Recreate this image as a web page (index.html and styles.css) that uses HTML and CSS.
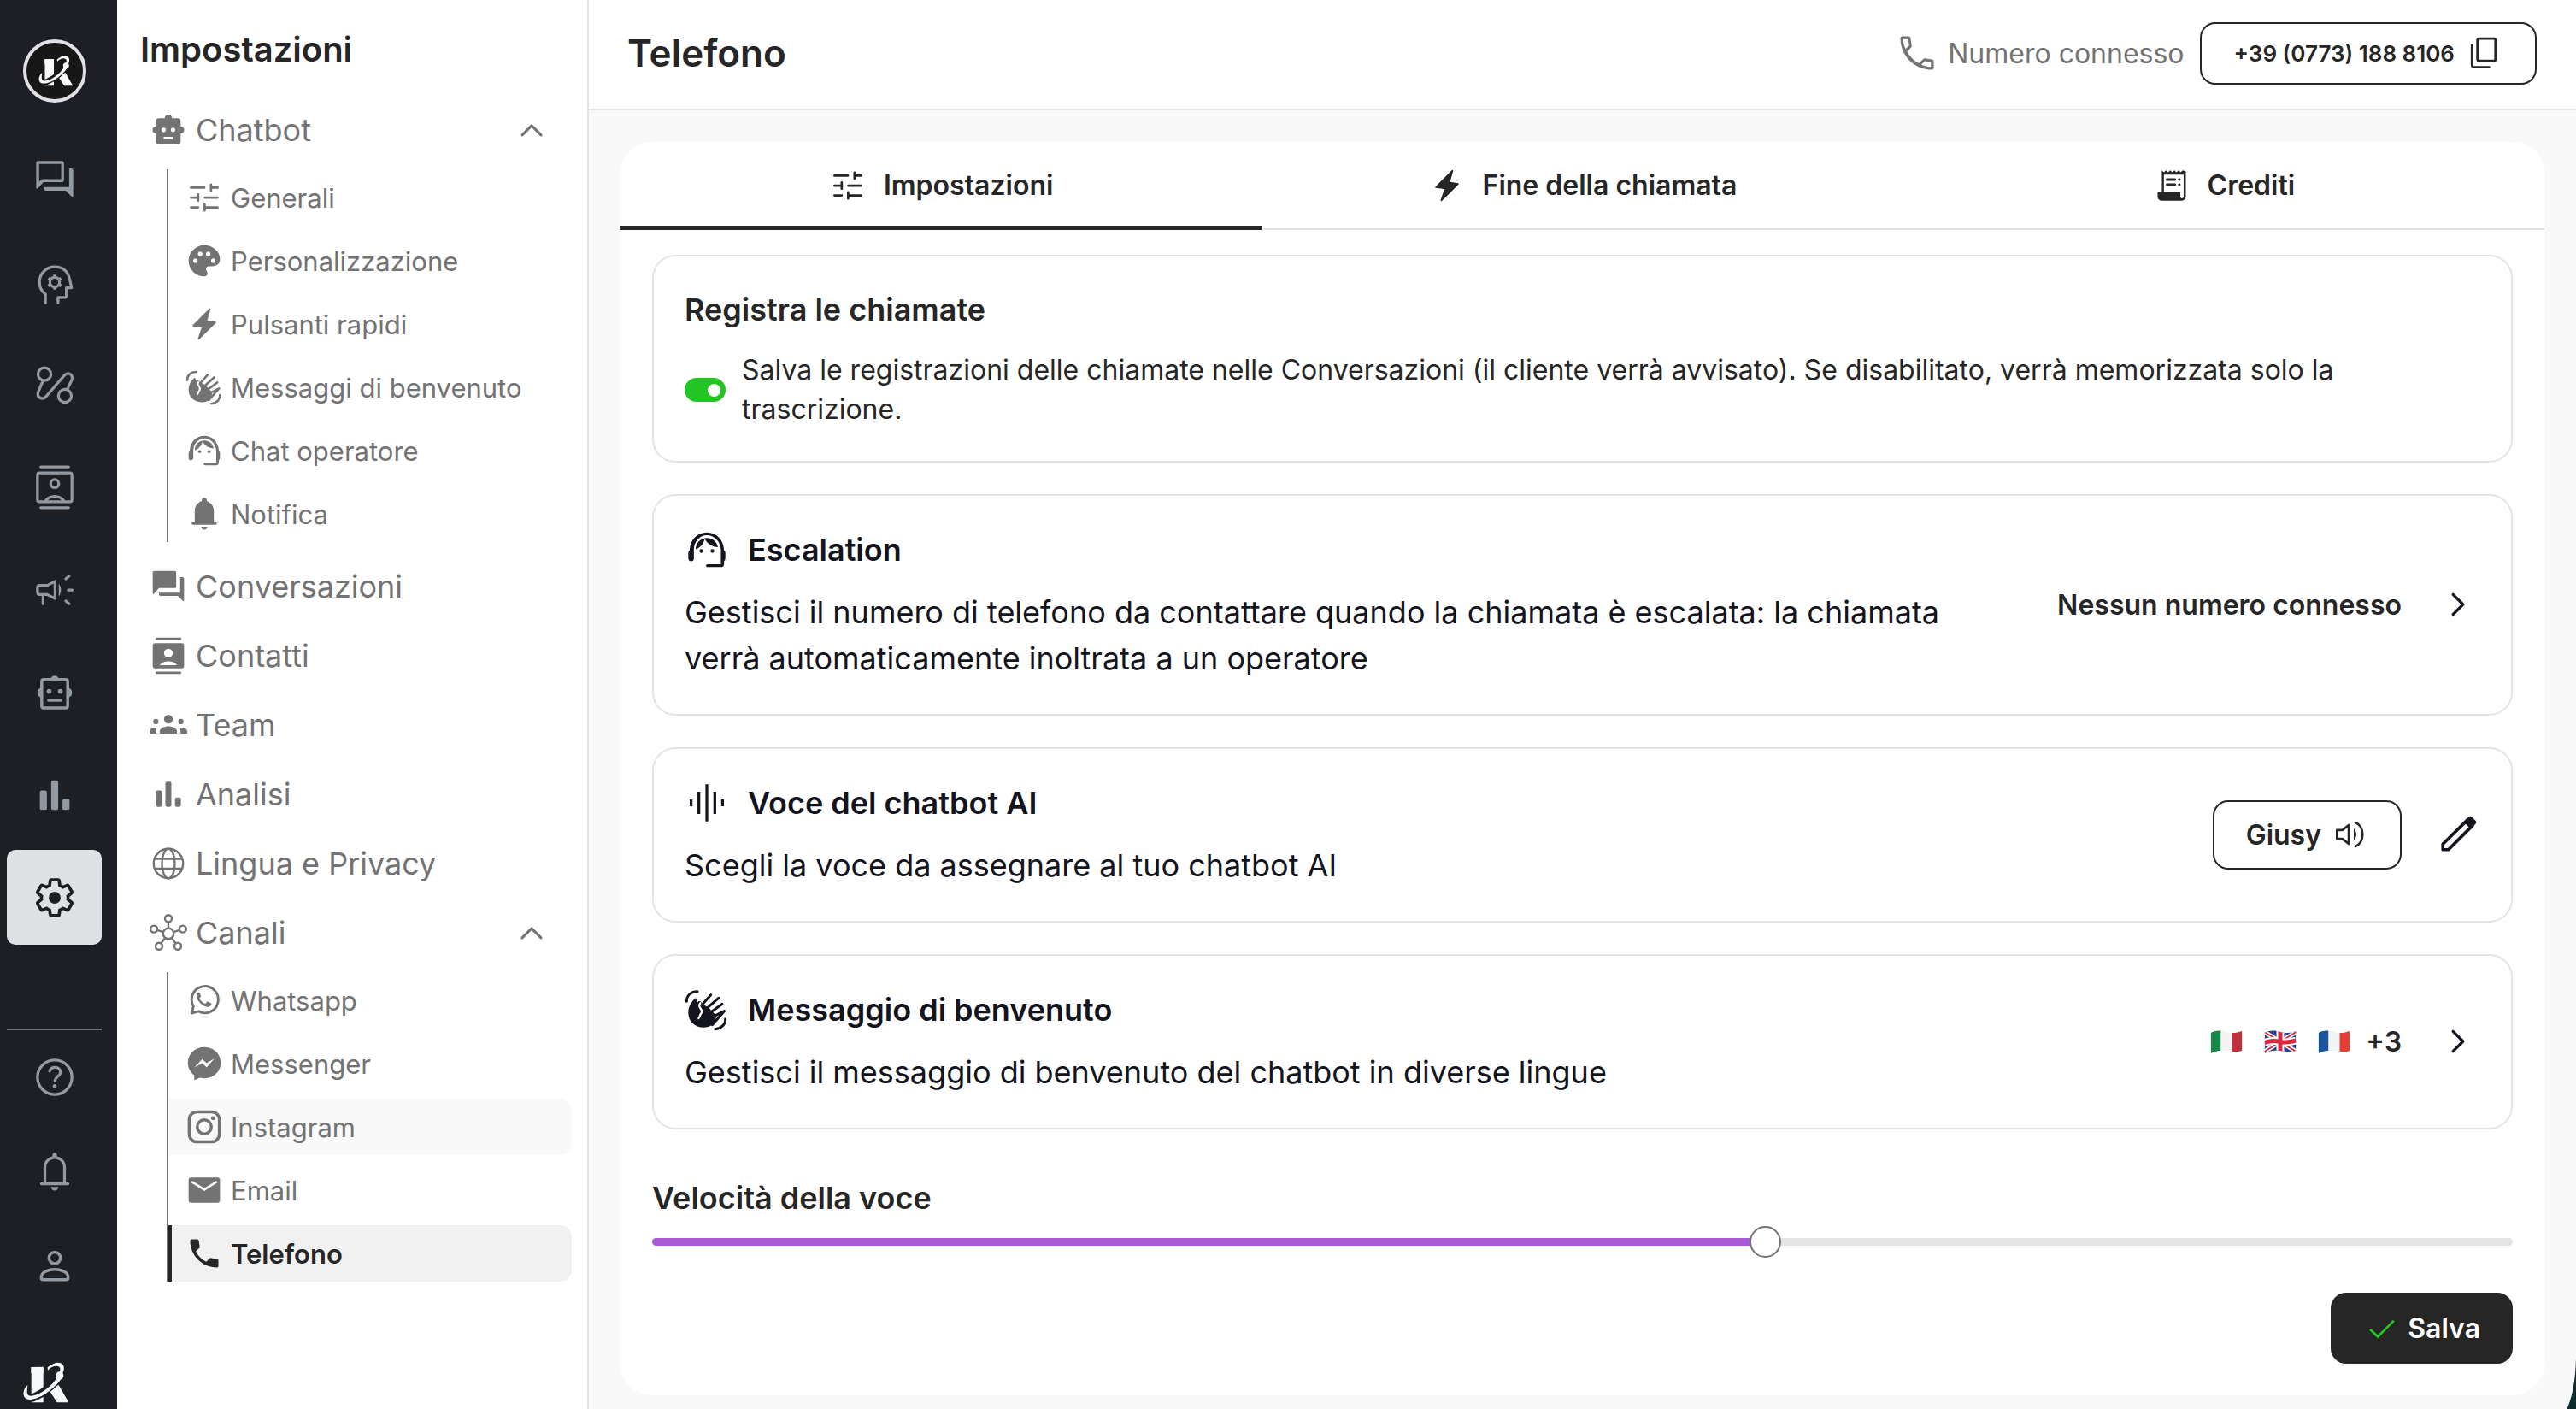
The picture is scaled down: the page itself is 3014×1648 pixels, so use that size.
FILE: index.html
```html
<!DOCTYPE html>
<html lang="it">
<head>
<meta charset="utf-8">
<meta name="viewport" content="width=device-width, initial-scale=1">
<title>Telefono – Impostazioni</title>
<link rel="stylesheet" href="styles.css">
</head>
<body>
<svg class="sprite" aria-hidden="true">
  <symbol id="logo" viewBox="0 0 192 189">
    <path d="M49 39H92V163H50V39zM146 102L181 163H140L110 116z" fill="#f8f9fb"/>
    <path d="M26 106C16 140 32 158 66 142C100 126 132 98 146 70C166 44 158 24 130 33" fill="none" stroke="var(--logo-bg)" stroke-width="28"/>
    <path d="M92 38V60H49V39z" fill="#f8f9fb"/>
    <path d="M37 102C18 118 18 146 34 151C50 158 84 146 112 124C132 108 148 92 156 78L142 72C132 90 116 108 92 124C66 141 38 146 36 132C34 122 36 112 37 102z" fill="#f8f9fb"/>
    <circle cx="149" cy="69" r="14" fill="#f8f9fb"/>
    <path d="M107 40C128 22 150 18 160 30C168 40 164 54 157 66L148 58C154 46 152 38 142 36C130 34 118 40 108 50z" fill="#f8f9fb"/>
  </symbol>
  <symbol id="forum-outline" viewBox="0 0 24 24"><path fill="currentColor" d="M15.5 3.6v8.2H5l-1.400 1.400V3.600h11.900m.5-1.600H3c-.55 0-1 .45-1 1v13.400c0 .6.500.6.8.4L6 13.400h10c.55 0 1-.45 1-1V3c0-.55-.45-1-1-1zm5 4h-1.200v10H6.200v1c0 .55.45 1 1 1H18l3.200 3.200c.3.300.8.100.8-.4V7c0-.55-.45-1-1-1z"/></symbol>
  <symbol id="forum" viewBox="0 0 24 24"><path fill="currentColor" d="M21 6h-1.500v10H6v1c0 .55.45 1 1 1h11l3.200 3.200c.3.300.8.100.8-.4V7c0-.55-.45-1-1-1zm-4 6V3c0-.55-.45-1-1-1H3c-.55 0-1 .45-1 1v13.200c0 .6.500.7.800.4L6 13h10c.55 0 1-.45 1-1z"/></symbol>
  <symbol id="gear" viewBox="0 0 24 24"><path d="M19.140 12.940c.04-.3.060-.61.060-.94 0-.32-.02-.64-.07-.94l2.030-1.580c.18-.14.23-.41.120-.61l-1.920-3.320c-.12-.22-.37-.29-.59-.22l-2.390.96c-.5-.38-1.030-.7-1.620-.94l-.36-2.540c-.04-.24-.24-.41-.48-.41h-3.840c-.24 0-.43.170-.47.410l-.36 2.540c-.59.240-1.130.570-1.620.940l-2.390-.96c-.22-.08-.47 0-.59.220L2.740 8.870c-.12.210-.08.470.120.610l2.030 1.580c-.05.300-.09.630-.09.940s.02.640.070.940l-2.030 1.580c-.18.140-.23.410-.12.610l1.920 3.320c.12.220.370.290.590.220l2.390-.96c.5.380 1.030.7 1.620.940l.36 2.540c.05.240.240.410.480.410h3.840c.24 0 .44-.17.470-.41l.36-2.540c.59-.24 1.130-.56 1.620-.94l2.390.96c.22.080.470 0 .59-.22l1.920-3.320c.12-.22.070-.47-.12-.61l-2.010-1.580z" fill="none" stroke="currentColor" stroke-width="1.700"/></symbol>
  <symbol id="settings" viewBox="0 0 24 24"><use href="#gear"/><circle cx="12" cy="12" r="3.200" fill="currentColor"/></symbol>
  <symbol id="mind" viewBox="0 0 24 24"><g fill="none" stroke="currentColor" stroke-width="1.500" stroke-linecap="round" stroke-linejoin="round"><path d="M7 23.200v-4.700C4.700 16.900 3.800 14.400 3.800 12c0-4.800 3.700-8.200 8.300-8.200 4.300 0 7 2.700 8 6.600l1 4.600h-2.800v4.100c0 .8-.5 1.200-1.200 1.200h-3.300v2.900"/><circle cx="12" cy="12" r="2.600"/><path stroke-width="1.700" stroke-linecap="butt" d="M12 9.500V8m0 8v-1.500M9.800 10.700 8.500 10m7 4-1.300-.7m0-2.600L15.500 10m-7 4 1.300-.7"/></g></symbol>
  <symbol id="route" viewBox="0 0 24 24"><g fill="none" stroke="currentColor" stroke-width="1.500"><circle cx="6.500" cy="6.300" r="3.500"/><circle cx="17.500" cy="18" r="3.500"/><path d="M5.700 9.700 3 16.200c-.8 2.800 2.400 4 4 2.500L17.200 7c2-2.200 5-.6 4 2.600l-2.500 5"/></g></symbol>
  <symbol id="contacts-outline" viewBox="0 0 24 24"><g fill="none" stroke="currentColor" stroke-width="1.500" stroke-linecap="round"><path d="M4.500 1h15M4.500 23h15"/><rect x="2.700" y="4.200" width="18.600" height="15.600" rx="1"/><circle cx="12" cy="10" r="2.200"/><path d="M7 19.500c2-3.500 8-3.500 10 0"/></g></symbol>
  <symbol id="contacts" viewBox="0 0 24 24"><path d="M4.500 1.200h15M4.500 22.800h15" stroke="currentColor" stroke-width="1.500" stroke-linecap="round"/><path fill="currentColor" fill-rule="evenodd" d="M3.500 4h17A1.500 1.500 0 0 1 22 5.500v13a1.500 1.500 0 0 1-1.500 1.500h-17A1.500 1.500 0 0 1 2 18.500v-13A1.500 1.500 0 0 1 3.500 4zM12 7.500a2.800 2.800 0 1 0 0 5.600 2.800 2.800 0 0 0 0-5.600zM6.500 18h11c-2-3.200-9-3.200-11 0z"/></symbol>
  <symbol id="campaign" viewBox="0 0 24 24"><g fill="none" stroke="currentColor" stroke-width="1.500" stroke-linecap="round" stroke-linejoin="round"><path d="M12.200 7.300v9.400L8 14.500H3.900c-.7 0-1.200-.5-1.200-1.200v-2.600c0-.7.500-1.200 1.200-1.200H8zM5.700 14.500v5M18 6l1.800-1.500M19.300 12h2.200M18 18l1.800 1.500"/></g><path fill="currentColor" d="M14.200 8.500c1.600 2 1.600 5 0 7z"/></symbol>
  <symbol id="robot-outline" viewBox="0 0 24 24"><g fill="currentColor"><path d="M9.800 4.500a2.300 2.300 0 0 1 4.400 0zM4.600 9.500a2.700 2.700 0 0 0 0 5.200zM19.400 9.500a2.700 2.700 0 0 1 0 5.200z"/><circle cx="9" cy="11.300" r="1.300"/><circle cx="15" cy="11.300" r="1.300"/></g><rect x="5" y="5" width="14" height="15.300" rx="1" fill="none" stroke="currentColor" stroke-width="1.600"/><path d="M8.700 16.200h6.600" stroke="currentColor" stroke-width="1.600" stroke-linecap="round"/></symbol>
  <symbol id="robot" viewBox="0 0 24 24"><path fill="currentColor" fill-rule="evenodd" d="M9.700 4.500a2.300 2.300 0 0 1 4.600 0H18a1.800 1.800 0 0 1 1.800 1.800v3.400a2.300 2.300 0 0 1 0 4.600v5.200a1.500 1.500 0 0 1-1.500 1.500H5.700a1.500 1.500 0 0 1-1.500-1.500v-5.200a2.300 2.300 0 0 1 0-4.600V6.300A1.800 1.800 0 0 1 6 4.500zM9 10.500a1.400 1.400 0 1 0 0 2.800 1.400 1.400 0 0 0 0-2.800zm6 0a1.400 1.400 0 1 0 0 2.800 1.400 1.400 0 0 0 0-2.800zm-6 5.800v1.500h6v-1.500z"/></symbol>
  <symbol id="bars" viewBox="0 0 24 24"><g fill="currentColor"><rect x="4" y="9.500" width="3.800" height="10.500" rx="1"/><rect x="10.100" y="4" width="3.800" height="16" rx="1"/><rect x="16.200" y="14" width="3.800" height="6" rx="1"/></g></symbol>
  <symbol id="help" viewBox="0 0 24 24"><g fill="none" stroke="currentColor" stroke-width="1.500" stroke-linecap="round"><circle cx="12" cy="12" r="9.300"/><path d="M9.300 8.700c.4-1.400 1.500-2.100 2.900-2.100 1.700 0 2.900 1.100 2.900 2.600 0 2.200-3 2.600-3 4.800"/></g><circle cx="12" cy="16.800" r="1.100" fill="currentColor"/></symbol>
  <symbol id="bell-outline" viewBox="0 0 24 24"><g fill="none" stroke="currentColor" stroke-width="1.500" stroke-linecap="round"><path d="M4.800 18.700h14.400M6.700 18.500V10c0-3.100 2.300-5.500 5.300-5.500s5.300 2.400 5.300 5.500v8.500"/></g><path fill="currentColor" d="M10.800 4.500V3.200a1.200 1.200 0 0 1 2.400 0v1.300zM10 20.400h4a2 2 0 0 1-4 0z"/></symbol>
  <symbol id="bell" viewBox="0 0 24 24"><path fill="currentColor" d="M4.700 19a.8.800 0 0 1 0-1.600h1.200V10c0-2.900 1.900-5.300 4.500-6v-.6a1.600 1.600 0 0 1 3.200 0V4c2.600.7 4.500 3.100 4.500 6v7.400h1.200a.8.800 0 0 1 0 1.600zM10.100 20.200h3.800a1.900 1.900 0 0 1-3.800 0z"/></symbol>
  <symbol id="person" viewBox="0 0 24 24"><g fill="none" stroke="currentColor" stroke-width="1.600"><circle cx="12" cy="8" r="3.100"/><path d="M4.800 18.200c0-2.600 4-4 7.200-4s7.200 1.400 7.200 4v.7c0 .5-.3.800-.8.800H5.600c-.5 0-.8-.3-.8-.8z"/></g></symbol>
  <symbol id="tune" viewBox="0 0 24 24"><path fill="none" stroke="currentColor" stroke-width="1.500" stroke-linecap="round" d="M3.500 5.700h8.500M16.300 3.700v4M16.300 5.700h4.200M3.500 12h4.300M8.100 10v4M12.300 12h8.200M3.500 18.300h4.600M12.200 16.300v4M12.200 18.300h8.300"/></symbol>
  <symbol id="palette" viewBox="0 0 24 24"><path fill="currentColor" d="M12 2C6.490 2 2 6.490 2 12s4.490 10 10 10c1.380 0 2-1 2-2 0-.61-.3-1.200-.6-1.700-.9-1.300 0-2.800 1.500-2.800H17c2.900 0 5-1.700 5-4.500C22 6.040 17.510 2 12 2zm5.700 11.500c-.83 0-1.400-.67-1.400-1.500s.570-1.500 1.400-1.500 1.400.67 1.400 1.500-.57 1.500-1.400 1.500zm-3.200-4.300c-.83 0-1.500-.67-1.500-1.500s.67-1.500 1.500-1.500 1.500.67 1.500 1.500-.67 1.500-1.500 1.500zM4.900 12c0-.83.670-1.500 1.500-1.500s1.400.67 1.400 1.500-.57 1.500-1.400 1.500S4.900 12.830 4.900 12zm6-4.300c0 .83-.67 1.500-1.500 1.500s-1.500-.67-1.500-1.500.67-1.500 1.500-1.500 1.500.67 1.500 1.500z"/></symbol>
  <symbol id="bolt" viewBox="0 0 24 24"><path fill="currentColor" stroke="currentColor" stroke-width="1" stroke-linejoin="round" d="M15.500 2.600 5 13l6 .8-2.600 7.700L19 11l-5.700-1z"/></symbol>
  <symbol id="wave" viewBox="11 27 156 156"><path fill="currentColor" d="M50 64C36 76 24 92 24 116C24 146 47 167 78 167C96 167 108 160 118 150L122 126L96 98L72 84C70 74 60 72 56 80z"/><g fill="none" stroke="currentColor" stroke-width="9" stroke-linecap="round"><path d="M70 90 103 53M85 104 130 64M98 118 143 85M110 130 150 110M108 158 150 110M18 76C18 54 34 41 56 41M118 173C140 171 155 157 154 137"/></g><path fill="none" stroke="#fff" stroke-width="7" stroke-linecap="round" d="M66 82C52 96 80 104 69 118C64 124 66 128 60 135"/></symbol>
  <symbol id="agent" viewBox="0 0 24 24"><g fill="currentColor"><path d="M21.300 12.300C21.100 6.400 17 2.600 12 2.600S2.900 6.400 2.700 12.300c-.5.300-.7.900-.7 1.600v2.700c0 .9.600 1.600 1.500 1.600s1.500-.6 1.500-1.400V12C5 7.800 8.100 4.200 12 4.200s7.600 3.600 7.600 7.800v7.800h-7.200c-.5 0-.8.300-.8.800s.3.800.8.800h7.200c1 0 1.700-.7 1.700-1.600v-1.700c.4-.3.700-.8.700-1.400v-3c0-.6-.2-1.100-.7-1.400z"/><circle cx="9" cy="12.700" r="1"/><circle cx="15" cy="12.700" r="1"/><path d="M18 10.600C17.500 7.600 15 5.600 12.050 5.600c-3.030 0-6.290 2.510-6.030 6.250 2.470-1.010 4.330-3.010 4.860-5.690 1.310 2.630 4 4.440 7.120 4.440z"/></g></symbol>
  <symbol id="team" viewBox="0 0 24 24"><g fill="currentColor"><circle cx="12" cy="8.200" r="2.800"/><circle cx="4" cy="9.800" r="1.700"/><circle cx="20" cy="9.800" r="1.700"/><path d="M6.500 17v-1c0-2 2.500-3.200 5.500-3.200s5.500 1.200 5.500 3.200v1c0 .3-.2.500-.5.500H7c-.3 0-.5-.2-.5-.5zM0 17v-1c0-1.500 1.600-2.600 4.900-2.400-.5.700-.7 1.500-.7 2.400v1.500H.500c-.3 0-.5-.2-.5-.5zM24 17v-1c0-1.500-1.600-2.600-4.900-2.400.5.700.7 1.500.7 2.400v1.500h3.700c.3 0 .5-.2.500-.5z"/></g></symbol>
  <symbol id="globe" viewBox="0 0 24 24"><g fill="none" stroke="currentColor" stroke-width="1.300"><circle cx="12" cy="12" r="9.400"/><ellipse cx="12" cy="12" rx="4.100" ry="9.400"/><path d="M3.200 9h17.600M3.200 15.200h17.600"/></g></symbol>
  <symbol id="hub" viewBox="0 0 24 24"><g fill="none" stroke="currentColor" stroke-width="1.300"><circle cx="12" cy="12.500" r="3.400"/><circle cx="12" cy="2.900" r="2.200"/><circle cx="2.800" cy="9.600" r="2.200"/><circle cx="21.200" cy="9.600" r="2.200"/><circle cx="6" cy="20.600" r="2.200"/><circle cx="18" cy="20.600" r="2.200"/><path d="M12 5.100v4M4.900 10.300l3.800 1.200M19.100 10.300l-3.800 1.200M7.300 18.800l2.600-3.500M16.700 18.800l-2.600-3.500"/></g></symbol>
  <symbol id="whatsapp" viewBox="0 0 24 24"><path fill="none" stroke="currentColor" stroke-width="1.600" stroke-linejoin="round" d="M3.900 20.200l1.200-4.300A8.500 8.500 0 1 1 8.300 19z"/><path fill="currentColor" d="M9.300 7.400c-.2-.4-.5-.5-.8-.5-.6 0-1.500.8-1.500 2.100 0 3 4 7.200 7.200 7.200 1.300 0 2.400-.8 2.400-1.800 0-.3 0-.4-.2-.5l-2-1c-.3-.1-.5-.1-.7.1l-.8 1c-.2.200-.4.200-.7.100-1.300-.6-2.500-1.700-3.200-3-.1-.3-.1-.4.100-.6l.6-.7c.1-.2.100-.4 0-.6z"/></symbol>
  <symbol id="messenger" viewBox="0 0 24 24"><path fill="currentColor" fill-rule="evenodd" d="M12 1.500c5.900 0 10.500 4.300 10.500 10S17.900 21.400 12 21.400c-1 0-2-.1-2.900-.4l-3.500 1.600v-3.200C3.100 17.600 1.500 14.800 1.500 11.500c0-5.700 4.600-10 10.500-10zM5.700 14.400l5-5.300 2.700 2.600 5-2.900-4.900 5.600-2.700-2.700z"/></symbol>
  <symbol id="instagram" viewBox="0 0 24 24"><g fill="none" stroke="currentColor" stroke-width="1.900"><rect x="2.400" y="2.400" width="19.200" height="19.200" rx="5"/><circle cx="12" cy="12" r="4.500"/></g><circle cx="17.600" cy="6.500" r="1.300" fill="currentColor"/></symbol>
  <symbol id="mail" viewBox="0 0 24 24"><path fill="currentColor" fill-rule="evenodd" d="M3.500 4h17c.8 0 1.500.7 1.500 1.500v13c0 .8-.7 1.500-1.500 1.500h-17c-.8 0-1.500-.7-1.500-1.500v-13C2 4.700 2.700 4 3.500 4zm.8 2-.7 1.200L12 12.600l8.400-5.400-.7-1.200L12 10.800z"/></symbol>
  <symbol id="phone" viewBox="0 0 24 24"><path fill="currentColor" d="M7.500 3H4c-.55 0-1 .45-1 1 0 9.390 7.610 17 17 17 .55 0 1-.45 1-1v-3.490c0-.55-.45-.9-1-1l-3.570-.570c-.4-.1-.8 0-1.020.240l-2.200 2.200c-2.830-1.450-5.150-3.760-6.590-6.590l2.200-2.200c.28-.28.360-.67.250-1.020L8.500 4c-.1-.55-.45-1-1-1z"/></symbol>
  <symbol id="phone-outline" viewBox="0 0 24 24"><path fill="currentColor" fill-rule="evenodd" d="M7.500 3H4c-.55 0-1 .45-1 1 0 9.390 7.610 17 17 17 .55 0 1-.45 1-1v-3.490c0-.55-.45-.9-1-1l-3.570-.570c-.4-.1-.8 0-1.020.240l-2.500 2.400c-2.500-1.450-4.850-3.760-6.290-6.290l2.200-2.300c.28-.28.360-.67.250-1.020L8.500 4c-.1-.55-.45-1-1-1zM4.500 4.500h2.600l.7 3.400L5.800 9.800C5 8.200 4.500 6.400 4.500 4.500zm15 15c-1.800-.1-3.600-.5-5.200-1.300l1.900-1.800 3.300.6z"/></symbol>
  <symbol id="copy" viewBox="0 0 24 24"><g fill="none" stroke="currentColor" stroke-width="1.500" stroke-linecap="round"><rect x="8" y="2.800" width="11.500" height="14.200" rx="1"/><path d="M4.500 7v12.700c0 .8.500 1.300 1.300 1.300h9.700"/></g></symbol>
  <symbol id="receipt" viewBox="0 0 24 24"><path fill="currentColor" d="M5.700 2.300 7 3.500l1.300-1.200 1.400 1.200L11 2.300l1.400 1.200 1.300-1.200L15 3.500l1.400-1.200 1.300 1.200L19 2.300 21 3v16c0 1.500-1 2.700-2.500 2.700H5.500C4 21.700 3 20.500 3 19v-2.200c0-.4.300-.8.800-.8h1.900zM7 5v11h9.700c.5 0 .8.300.8.800V19c0 .7.400 1.200 1 1.200s1.100-.5 1.100-1.200V5z"/><path stroke="currentColor" stroke-width="1.600" stroke-linecap="round" d="M9 8.200h5M9 11.500h5M16.800 8.200h.1M16.800 11.500h.1"/></symbol>
  <symbol id="voice" viewBox="0 0 24 24"><path stroke="currentColor" stroke-width="1.500" d="M3.500 10.200v3.600M7.700 6v12M12 2v20M16.300 6v12M20.500 10.200v3.600"/></symbol>
  <symbol id="speaker" viewBox="0 0 24 24"><g fill="none" stroke="currentColor" stroke-width="1.500" stroke-linejoin="round" stroke-linecap="round"><path d="M11.500 6v12L7.500 14.800H4V9.200h3.500zM15.800 4.400c6 2.400 6 12.800 0 15.200"/></g><path fill="currentColor" d="M14.700 8.300c2.200 1.700 2.200 5.700 0 7.400z"/></symbol>
  <symbol id="pencil" viewBox="0 0 24 24"><path d="M3.800 20.200v-3L17 4.200l2.900 2.900L6.800 20.200z" fill="none" stroke="currentColor" stroke-width="1.700" stroke-linejoin="round"/><path fill="currentColor" d="m15 5.200 2.600-2.600c.6-.6 1.300-.6 1.900 0l1.900 1.900c.6.600.6 1.300 0 1.900L18.800 9z"/></symbol>
  <symbol id="chev-up" viewBox="0 0 24 24"><path d="m6 15.200 6-6 6 6" fill="none" stroke="currentColor" stroke-width="1.600" stroke-linecap="round" stroke-linejoin="round"/></symbol>
  <symbol id="chev-right" viewBox="0 0 24 24"><path d="m9.300 6.600 5.400 5.400-5.400 5.400" fill="none" stroke="currentColor" stroke-width="1.500" stroke-linecap="round" stroke-linejoin="round"/></symbol>
  <symbol id="check" viewBox="0 0 24 24"><path d="m4.500 12.500 4.800 4.700L19.500 7" fill="none" stroke="currentColor" stroke-width="1.500"/></symbol>
  <clipPath id="flag-shape"><path d="M0 3C7 0 11 0 18.500 2S30 3 37 1V24C30 26 26 25 18.500 24S7 24 0 27z"/></clipPath>
</svg>

<div class="app">
  <nav class="rail" aria-label="Principale">
    <a class="rail-logo" href="#" aria-label="Home"><svg class="rail-logo-mark"><use href="#logo"/></svg></a>
    <a class="rail-item" href="#" aria-label="Conversazioni"><svg class="icon-lg"><use href="#forum-outline"/></svg></a>
    <a class="rail-item" href="#" aria-label="Conoscenza"><svg class="icon-lg"><use href="#mind"/></svg></a>
    <a class="rail-item" href="#" aria-label="Percorsi"><svg class="icon-lg"><use href="#route"/></svg></a>
    <a class="rail-item" href="#" aria-label="Contatti"><svg class="icon-lg"><use href="#contacts-outline"/></svg></a>
    <a class="rail-item" href="#" aria-label="Campagne"><svg class="icon-lg"><use href="#campaign"/></svg></a>
    <a class="rail-item" href="#" aria-label="Chatbot"><svg class="icon-lg"><use href="#robot-outline"/></svg></a>
    <a class="rail-item" href="#" aria-label="Analisi"><svg class="icon-lg"><use href="#bars"/></svg></a>
    <a class="rail-item rail-item-active" href="#" aria-label="Impostazioni" aria-current="page"><svg class="icon-lg"><use href="#settings"/></svg></a>
    <hr class="rail-line">
    <div class="rail-tools">
      <a class="rail-item" href="#" aria-label="Aiuto"><svg class="icon-lg"><use href="#help"/></svg></a>
      <a class="rail-item" href="#" aria-label="Notifiche"><svg class="icon-lg"><use href="#bell-outline"/></svg></a>
      <a class="rail-item" href="#" aria-label="Profilo"><svg class="icon-lg"><use href="#person"/></svg></a>
    </div>
    <svg class="rail-foot" aria-hidden="true"><use href="#logo"/></svg>
  </nav>

  <aside class="side">
    <h2 class="side-title">Impostazioni</h2>
    <nav aria-label="Impostazioni">
      <button class="side-item" type="button" aria-expanded="true"><svg class="icon"><use href="#robot"/></svg><span>Chatbot</span><svg class="icon side-chev"><use href="#chev-up"/></svg></button>
      <div class="side-sub">
        <a class="sub-item" href="#"><svg class="icon"><use href="#tune"/></svg>Generali</a>
        <a class="sub-item" href="#"><svg class="icon"><use href="#palette"/></svg>Personalizzazione</a>
        <a class="sub-item" href="#"><svg class="icon"><use href="#bolt"/></svg>Pulsanti rapidi</a>
        <a class="sub-item" href="#"><svg class="icon"><use href="#wave"/></svg>Messaggi di benvenuto</a>
        <a class="sub-item" href="#"><svg class="icon"><use href="#agent"/></svg>Chat operatore</a>
        <a class="sub-item" href="#"><svg class="icon"><use href="#bell"/></svg>Notifica</a>
      </div>
      <a class="side-item" href="#"><svg class="icon"><use href="#forum"/></svg><span>Conversazioni</span></a>
      <a class="side-item" href="#"><svg class="icon"><use href="#contacts"/></svg><span>Contatti</span></a>
      <a class="side-item" href="#"><svg class="icon"><use href="#team"/></svg><span>Team</span></a>
      <a class="side-item" href="#"><svg class="icon"><use href="#bars"/></svg><span>Analisi</span></a>
      <a class="side-item" href="#"><svg class="icon"><use href="#globe"/></svg><span>Lingua e Privacy</span></a>
      <button class="side-item" type="button" aria-expanded="true"><svg class="icon"><use href="#hub"/></svg><span>Canali</span><svg class="icon side-chev"><use href="#chev-up"/></svg></button>
      <div class="side-sub">
        <a class="sub-item" href="#"><svg class="icon"><use href="#whatsapp"/></svg>Whatsapp</a>
        <a class="sub-item" href="#"><svg class="icon"><use href="#messenger"/></svg>Messenger</a>
        <a class="sub-item sub-item-hover" href="#"><svg class="icon"><use href="#instagram"/></svg>Instagram</a>
        <a class="sub-item" href="#"><svg class="icon"><use href="#mail"/></svg>Email</a>
        <a class="sub-item sub-item-active" href="#" aria-current="page"><svg class="icon"><use href="#phone"/></svg>Telefono</a>
      </div>
    </nav>
  </aside>

  <div class="page">
    <header class="top">
      <h1 class="top-title">Telefono</h1>
      <div class="top-number">
        <span class="top-label"><svg class="icon-lg"><use href="#phone-outline"/></svg>Numero connesso</span>
        <button class="btn number-btn" type="button">+39 (0773) 188 8106<svg class="icon"><use href="#copy"/></svg></button>
      </div>
    </header>

    <main class="panel">
      <div class="tabs" role="tablist">
        <button class="tab tab-active" type="button" role="tab" aria-selected="true"><svg class="icon"><use href="#tune"/></svg>Impostazioni</button>
        <button class="tab" type="button" role="tab" aria-selected="false"><svg class="icon"><use href="#bolt"/></svg>Fine della chiamata</button>
        <button class="tab" type="button" role="tab" aria-selected="false"><svg class="icon"><use href="#receipt"/></svg>Crediti</button>
      </div>

      <form class="body">
        <div class="cards">
          <section class="card card-record">
            <h3 class="record-title">Registra le chiamate</h3>
            <div class="record-row">
              <input class="switch" type="checkbox" id="record" checked>
              <label class="record-text" for="record">Salva le registrazioni delle chiamate nelle Conversazioni (il cliente verrà avvisato). Se disabilitato, verrà memorizzata solo la trascrizione.</label>
            </div>
          </section>

          <section class="card card-row">
            <div class="card-main">
              <h3 class="card-title"><svg class="icon-lg"><use href="#agent"/></svg>Escalation</h3>
              <p class="card-desc">Gestisci il numero di telefono da contattare quando la chiamata è escalata: la chiamata verrà automaticamente inoltrata a un operatore</p>
            </div>
            <div class="card-side">
              <span class="card-value">Nessun numero connesso</span>
              <button class="icon-btn" type="button" aria-label="Apri escalation"><svg class="icon-lg"><use href="#chev-right"/></svg></button>
            </div>
          </section>

          <section class="card card-row">
            <div class="card-main">
              <h3 class="card-title"><svg class="icon-lg"><use href="#voice"/></svg>Voce del chatbot AI</h3>
              <p class="card-desc">Scegli la voce da assegnare al tuo chatbot AI</p>
            </div>
            <div class="card-side">
              <button class="btn voice-btn" type="button">Giusy<svg class="icon"><use href="#speaker"/></svg></button>
              <button class="icon-btn" type="button" aria-label="Modifica voce"><svg class="icon-lg"><use href="#pencil"/></svg></button>
            </div>
          </section>

          <section class="card card-row">
            <div class="card-main">
              <h3 class="card-title"><svg class="icon-lg"><use href="#wave"/></svg>Messaggio di benvenuto</h3>
              <p class="card-desc">Gestisci il messaggio di benvenuto del chatbot in diverse lingue</p>
            </div>
            <div class="card-side">
              <div class="languages">
                <div class="flags">
                  <svg class="flag" viewBox="0 0 37 27" role="img" aria-label="Italiano"><g clip-path="url(#flag-shape)"><path fill="#17884a" d="M0 0h12v27H0z"/><path fill="#f4f4f5" d="M12 0h13v27H12z"/><path fill="#c0303b" d="M25 0h12v27H25z"/></g></svg>
                  <svg class="flag" viewBox="0 0 37 27" role="img" aria-label="Inglese"><g clip-path="url(#flag-shape)"><path fill="#26408f" d="M0 0h37v27H0z"/><path stroke="#fff" stroke-width="5" d="m0 2 37 23M0 25 37 2"/><path stroke="#d8283f" stroke-width="2" d="m0 2 37 23M0 25 37 2"/><path fill="none" stroke="#fff" stroke-width="9" d="M18.500 0v27M0 14.500C9 12 12 12 18.500 13.500S30 14 37 12"/><path fill="none" stroke="#d8283f" stroke-width="5" d="M18.500 0v27M0 14.500C9 12 12 12 18.500 13.500S30 14 37 12"/></g></svg>
                  <svg class="flag" viewBox="0 0 37 27" role="img" aria-label="Francese"><g clip-path="url(#flag-shape)"><path fill="#1a56a0" d="M0 0h12v27H0z"/><path fill="#f4f4f5" d="M12 0h13v27H12z"/><path fill="#e63b36" d="M25 0h12v27H25z"/></g></svg>
                </div>
                <span class="card-value">+3</span>
              </div>
              <button class="icon-btn" type="button" aria-label="Apri messaggio di benvenuto"><svg class="icon-lg"><use href="#chev-right"/></svg></button>
            </div>
          </section>
        </div>

        <div class="speed">
          <label class="speed-label" for="speed">Velocità della voce</label>
          <input class="slider" type="range" id="speed" min="0" max="100" value="60" style="--value: 60%">
        </div>

        <div class="actions">
          <button class="save" type="submit"><svg class="icon save-check"><use href="#check"/></svg>Salva</button>
        </div>
      </form>
    </main>
  </div>
  <svg class="corner" viewBox="0 0 11 60" aria-hidden="true"><path fill="#0c2b2a" d="M11 0C10 28 7 44 0 60h11z"/></svg>
</div>
</body>
</html>
```
FILE: styles.css
```css
:root {
  --ink: #262626;
  --ink-deep: #14141e;
  --muted: #737373;
  --line: #e4e4e4;
  --rail: #1e1f24;
  --rail-icon: #9299a2;
}

*,
*::before,
*::after {
  box-sizing: border-box;
}

body,
h1,
h2,
h3,
p {
  margin: 0;
}

body {
  background: #f9f9f9;
  color: var(--ink);
  font-family: Inter, "Liberation Sans", sans-serif;
  font-size: 32px;
}

button {
  padding: 0;
  border: 0;
  background: none;
  color: inherit;
  font: inherit;
  cursor: pointer;
}

a {
  color: inherit;
  text-decoration: none;
}

svg {
  display: block;
  flex: none;
}

.sprite {
  position: absolute;
  width: 0;
  height: 0;
}

.icon {
  width: 44px;
  height: 44px;
}

.icon-lg {
  width: 52px;
  height: 52px;
}

.app {
  position: relative;
  display: flex;
  min-height: 100vh;
}

/* Icon rail */
.rail {
  --logo-bg: var(--rail);
  display: flex;
  flex: none;
  flex-direction: column;
  align-items: flex-start;
  width: 137px;
  padding: 46px 8px 0;
  background: var(--rail);
  color: var(--rail-icon);
}

.rail-logo {
  --logo-bg: #171717;
  display: grid;
  place-items: center;
  width: 74px;
  height: 74px;
  margin: 0 0 34px 19px;
  border: 4px solid #e0e0e6;
  border-radius: 50%;
  background: #171717;
}

.rail-logo-mark {
  width: 48px;
  height: 48px;
}

.rail-item {
  display: grid;
  place-items: center;
  width: 111px;
  height: 111px;
  margin-bottom: 9px;
  border-radius: 10px;
}

.rail-item-active {
  background: #dfe0e4;
  color: var(--rail);
}

.rail-line {
  width: 111px;
  height: 2px;
  margin: 89px 0 0;
  border: 0;
  background: #6d747d;
}

.rail-tools .rail-item {
  height: 110px;
  margin-bottom: 0;
}

.rail-foot {
  width: 64px;
  height: 63px;
  margin: auto 0 0 12px;
}

/* Settings menu */
.side {
  flex: none;
  width: 552px;
  border-right: 2px solid var(--line);
  background: #fff;
  color: var(--muted);
}

.side-title {
  padding: 28px 27px 23px;
  color: var(--ink);
  font-size: 40px;
  font-weight: 600;
  line-height: 60px;
}

.side-item {
  display: flex;
  align-items: center;
  gap: 10px;
  width: 100%;
  height: 81px;
  padding: 0 43px 0 38px;
  font-size: 36px;
}

.side-chev {
  margin-left: auto;
}

.side-sub {
  display: grid;
  gap: 8px;
  margin: 6px 18px 11px 58px;
  border-left: 2px solid var(--muted);
}

.sub-item {
  display: flex;
  align-items: center;
  gap: 9px;
  height: 66px;
  padding-left: 20px;
  border-radius: 0 14px 14px 0;
  font-size: 31px;
}

.sub-item-hover {
  background: #f9f9f9;
}

.sub-item-active {
  padding-left: 16px;
  border-left: 4px solid var(--ink);
  background: #f1f1f1;
  color: var(--ink);
  font-weight: 600;
}

/* Page header */
.page {
  flex: 1;
  min-width: 0;
}

.top {
  display: flex;
  align-items: center;
  justify-content: space-between;
  height: 129px;
  padding: 0 46px 3px 45px;
  border-bottom: 2px solid var(--line);
  background: #fff;
}

.top-title {
  font-size: 44px;
  font-weight: 600;
}

.top-number {
  display: flex;
  align-items: center;
  gap: 18px;
}

.top-label {
  display: flex;
  align-items: center;
  gap: 10px;
  color: var(--muted);
}

.btn {
  display: flex;
  align-items: center;
  border: 2px solid var(--ink);
  border-radius: 18px;
  background: #fff;
  font-weight: 600;
}

.number-btn {
  gap: 12px;
  height: 73px;
  padding: 0 38px;
  font-size: 26px;
}

/* Content panel */
.panel {
  margin: 37px 37px 17px;
  overflow: hidden;
  border-radius: 37px;
  background: #fff;
}

.tabs {
  display: grid;
  grid-template-columns: repeat(3, 1fr);
  height: 103px;
}

.tab {
  display: flex;
  align-items: center;
  justify-content: center;
  gap: 20px;
  border-bottom: 2px solid var(--line);
  font-weight: 600;
}

.tab-active {
  padding-top: 3px;
  border-bottom: 5px solid var(--ink);
}

.body {
  padding: 29px 37px 37px;
}

.cards {
  display: grid;
  gap: 37px;
}

.card {
  padding: 37px 36px 38px;
  border: 2px solid var(--line);
  border-radius: 27px;
}

.card-record {
  padding-bottom: 37px;
}

.record-title {
  font-size: 36px;
  font-weight: 600;
  line-height: 50px;
}

.record-row {
  display: flex;
  align-items: center;
  gap: 19px;
  margin-top: 23px;
}

.record-text {
  flex: 1;
  line-height: 46px;
}

.switch {
  display: flex;
  flex: none;
  align-items: center;
  justify-content: flex-end;
  width: 48px;
  height: 28px;
  margin: 0;
  padding: 0 6px;
  border-radius: 14px;
  background: #22c522;
  appearance: none;
  cursor: pointer;
}

.switch::before {
  width: 15px;
  height: 15px;
  border-radius: 50%;
  background: #fff;
  content: "";
}

.switch:not(:checked) {
  justify-content: flex-start;
  background: #c4c4c4;
}

.card-row {
  display: flex;
  align-items: center;
  justify-content: space-between;
  gap: 80px;
}

.card-main {
  color: var(--ink-deep);
}

.card-title {
  display: flex;
  align-items: center;
  gap: 22px;
  margin-bottom: 20px;
  font-size: 36px;
  font-weight: 600;
  line-height: 52px;
}

.card-desc {
  font-size: 36px;
  line-height: 54px;
}

.card-side {
  display: flex;
  flex: none;
  align-items: center;
  gap: 40px;
}

.card-value {
  font-weight: 600;
}

.icon-btn {
  color: var(--ink-deep);
}

.voice-btn {
  gap: 11px;
  height: 81px;
  padding: 0 37px;
}

.languages {
  display: flex;
  align-items: center;
  gap: 18px;
}

.flags {
  display: flex;
  gap: 25px;
}

.flag {
  width: 38px;
  height: 27px;
}

/* Voice speed */
.speed {
  display: grid;
  gap: 6px;
  margin-top: 53px;
}

.speed-label {
  font-size: 36px;
  font-weight: 600;
  line-height: 54px;
}

.slider {
  width: 100%;
  height: 37px;
  margin: 0;
  background: none;
  appearance: none;
  cursor: pointer;
}

.slider::-webkit-slider-runnable-track {
  height: 9px;
  border-radius: 5px;
  background: linear-gradient(to right, #ab5ad7 var(--value), var(--line) var(--value));
}

.slider::-webkit-slider-thumb {
  width: 37px;
  height: 37px;
  margin-top: -14px;
  border: 2px solid #737373;
  border-radius: 50%;
  background: #fff;
  appearance: none;
}

.actions {
  display: flex;
  justify-content: flex-end;
  margin-top: 41px;
}

.save {
  display: flex;
  align-items: center;
  gap: 8px;
  height: 83px;
  padding: 0 38px;
  border-radius: 18px;
  background: var(--ink);
  color: #fff;
  font-weight: 600;
}

.save-check {
  color: #22c522;
}

.corner {
  position: absolute;
  right: 0;
  bottom: 0;
  width: 11px;
  height: 60px;
}
```
